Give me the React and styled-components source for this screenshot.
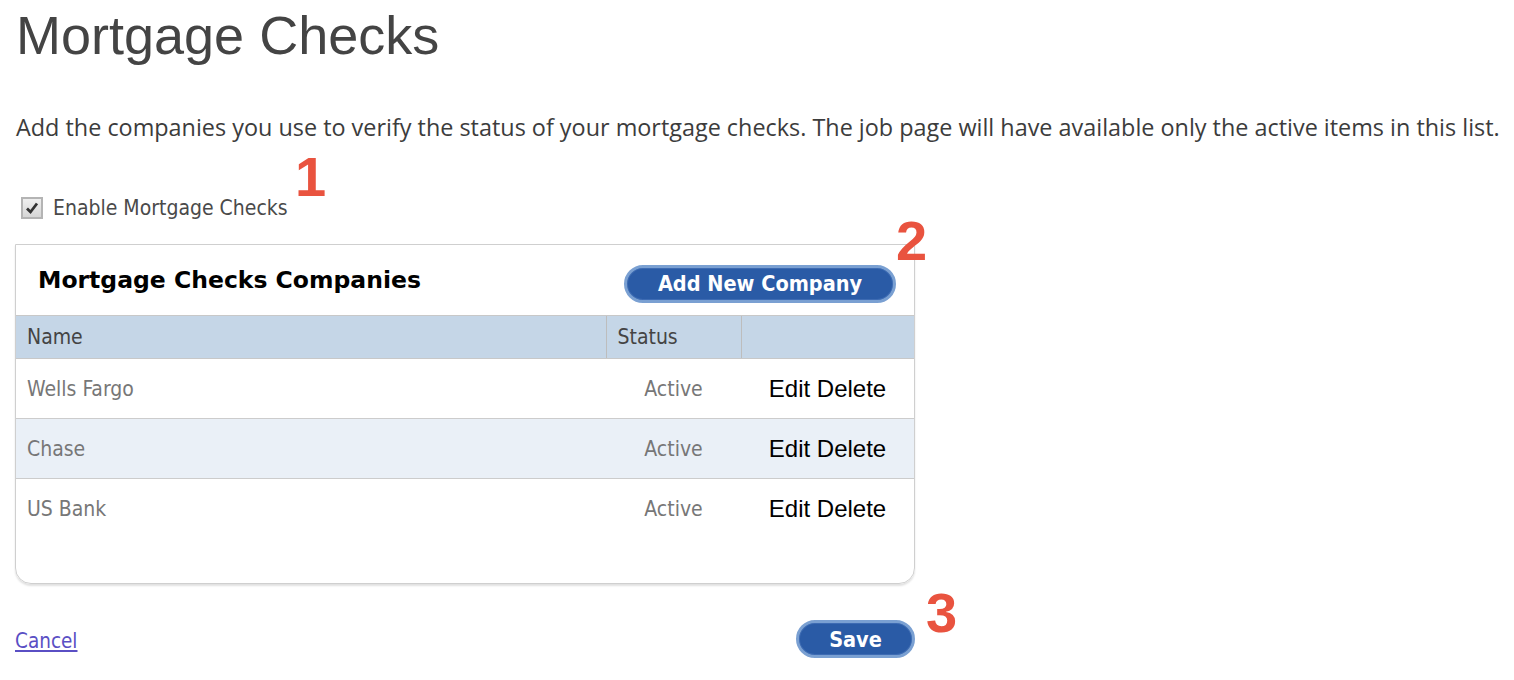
import React from "react";
import styled, { createGlobalStyle } from "styled-components";

const GlobalStyle = createGlobalStyle`
  html, body {
    margin: 0;
    padding: 0;
    background: #ffffff;
  }
  body {
    font-family: "DejaVu Sans Condensed", "DejaVu Sans", sans-serif;
  }
`

const Page = styled.div`
  padding: 4px 15px 0 15px;
  position: relative;
`
const Title = styled.h1`
  margin: 0;
  font-family: "Liberation Sans", Arial, sans-serif;
  font-weight: normal;
  font-size: 54px;
  line-height: 62px;
  color: #444444;
  padding-left: 1px;
`
const Intro = styled.p`
  margin: 47px 0 0 1px;
  font-family: "Open Sans", sans-serif;
  font-size: 23.4px;
  line-height: 28px;
  color: #3c3c3c;
  white-space: nowrap;
`
const CheckRow = styled.label`
  display: flex;
  align-items: center;
  gap: 10px;
  margin: 55px 0 0 6px;
  font-size: 21px;
  line-height: 24px;
  color: #4a4a4a;
  width: max-content;
`
const Box = styled.span`
  width: 18px;
  height: 18px;
  border: 2px solid #b4b4b4;
  background: linear-gradient(#efefef, #d6d6d6);
  display: flex;
  align-items: center;
  justify-content: center;
  svg {
    display: block;
  }
`
const Panel = styled.section`
  margin-top: 24px;
  width: 898px;
  border: 1px solid #cfcfcf;
  border-radius: 0 0 16px 16px;
  box-shadow: 0 2px 2px rgba(0, 0, 0, 0.12);
  padding-bottom: 45px;
`
const PanelHead = styled.div`
  height: 70px;
  display: flex;
  align-items: center;
  justify-content: space-between;
  padding: 0 18px 0 22px;
  h2 {
    margin: 0;
    font-family: "DejaVu Sans", sans-serif;
    font-size: 23.5px;
    font-weight: bold;
    color: #000;
  }
`
const PillButton = styled.button`
  height: ${(p) => p.$h}px;
  width: ${(p) => p.$w}px;
  border-radius: 19px;
  border: 3px solid #7aa0d2;
  background: #2a5ba6;
  color: #ffffff;
  font-family: "DejaVu Sans Condensed", "DejaVu Sans", sans-serif;
  font-weight: bold;
  font-size: 21.5px;
  padding: 0;
  box-shadow: inset 0 0 0 1px #3d6bb3;
  cursor: pointer;
`
const AddButton = styled(PillButton)`
  margin-top: 7px;
`
const Table = styled.table`
  width: 100%;
  border-collapse: collapse;
`
const HeadCell = styled.th`
  background: #c5d6e7;
  height: 42px;
  padding: 0 0 0 11px;
  text-align: left;
  font-weight: normal;
  font-size: 21px;
  color: #444;
  border-top: 1px solid #c8c8c8;
  border-bottom: 1px solid #c8c8c8;
  & + & {
    border-left: 1px solid #bdbdbd;
  }
`
const Row = styled.tr`
  background: ${(p) => (p.$alt ? "#eaf0f7" : "#ffffff")};
  border-bottom: ${(p) => (p.$last ? "none" : "1px solid #cccccc")};
`
const Cell = styled.td`
  height: 59px;
  padding: 0 0 0 11px;
  font-size: 21px;
  color: #777777;
`
const StatusCell = styled(Cell)`
  text-align: center;
  padding: 0;
`
const ActionCell = styled.td`
  text-align: center;
  font-family: "Liberation Sans", Arial, sans-serif;
  font-size: 24px;
  color: #000;
  a {
    color: inherit;
    text-decoration: none;
  }
`
const Footer = styled.div`
  width: 900px;
  display: flex;
  justify-content: space-between;
  align-items: center;
  margin-top: 36px;
`
const CancelLink = styled.a`
  font-size: 20.5px;
  color: #5a4fc4;
  text-decoration: underline;
  margin-top: 4px;
`
const Marker = styled.span`
  position: absolute;
  left: ${(p) => p.$x}px;
  top: ${(p) => p.$y}px;
  font-family: "Liberation Sans", Arial, sans-serif;
  font-weight: bold;
  font-size: 56px;
  line-height: 1;
  color: #e9533f;
`

const companies = [
  { name: "Wells Fargo", status: "Active" },
  { name: "Chase", status: "Active" },
  { name: "US Bank", status: "Active" },
];

export default function App() {
  return (
    <>
      <GlobalStyle />
      <Page>
        <Title>Mortgage Checks</Title>
        <Intro>
          Add the companies you use to verify the status of your mortgage checks. The job page will have available only the active items in this list.
        </Intro>
        <CheckRow>
          <Box>
            <svg width="14" height="14" viewBox="0 0 14 14">
              <path d="M2 7.5 L5.5 11 L12 2.5" fill="none" stroke="#333" strokeWidth="2.8" />
            </svg>
          </Box>
          Enable Mortgage Checks
        </CheckRow>
        <Panel>
          <PanelHead>
            <h2>Mortgage Checks Companies</h2>
            <AddButton $w={272} $h={38}>Add New Company</AddButton>
          </PanelHead>
          <Table>
            <colgroup>
              <col style={{ width: 590 }} />
              <col style={{ width: 135 }} />
              <col />
            </colgroup>
            <thead>
              <tr>
                <HeadCell>Name</HeadCell>
                <HeadCell>Status</HeadCell>
                <HeadCell />
              </tr>
            </thead>
            <tbody>
              {companies.map((c, i) => (
                <Row key={c.name} $alt={i % 2 === 1} $last={i === companies.length - 1}>
                  <Cell>{c.name}</Cell>
                  <StatusCell>{c.status}</StatusCell>
                  <ActionCell>
                    <a href="#">Edit</a> <a href="#">Delete</a>
                  </ActionCell>
                </Row>
              ))}
            </tbody>
          </Table>
        </Panel>
        <Footer>
          <CancelLink href="#">Cancel</CancelLink>
          <PillButton $w={119} $h={38}>Save</PillButton>
        </Footer>
        <Marker $x={295} $y={149}>1</Marker>
        <Marker $x={896} $y={213}>2</Marker>
        <Marker $x={926} $y={585}>3</Marker>
      </Page>
    </>
  );
}
